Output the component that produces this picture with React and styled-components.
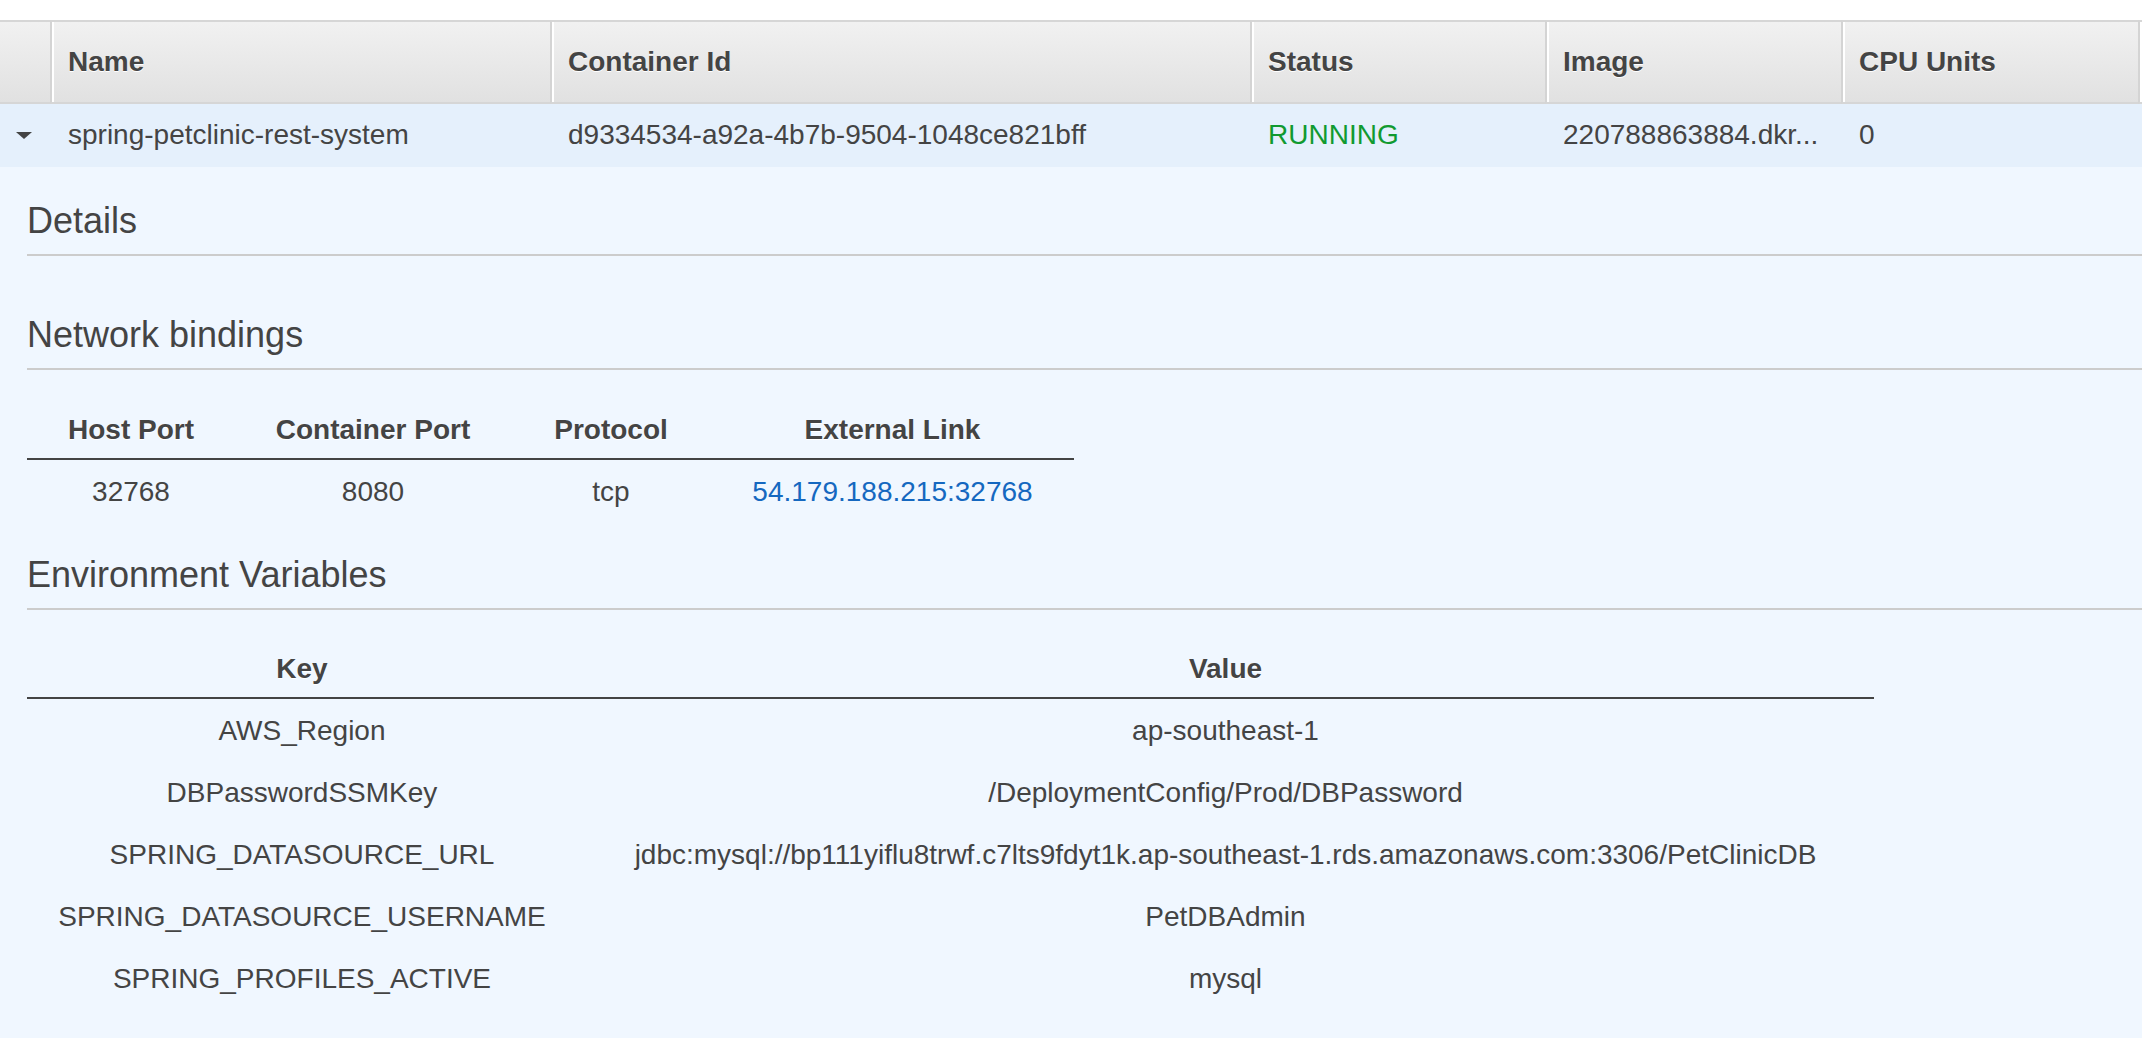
import styled, { createGlobalStyle } from 'styled-components';

const GlobalStyle = createGlobalStyle`
  html, body {
    margin: 0;
    padding: 0;
    background: #fff;
    font-family: "Liberation Sans", Arial, Helvetica, sans-serif;
    color: #444;
    overflow: hidden;
  }
`;

const Page = styled.div`
  width: 2142px;
  height: 1038px;
  padding-top: 20px;
  box-sizing: border-box;
  overflow: hidden;
`;

const Grid = styled.table`
  width: 2438px;
  table-layout: fixed;
  border-collapse: separate;
  border-spacing: 0;
`;

const HeadCell = styled.th`
  width: ${(p) => p.w}px;
  box-sizing: border-box;
  padding: 23px 16px;
  line-height: 34px;
  font-size: 28px;
  font-weight: 700;
  text-align: left;
  color: #444;
  text-shadow: 0 1px 0 #fff;
  white-space: nowrap;
  background: linear-gradient(to bottom, #f1f1f1, #e1e1e1);
  border-top: 2px solid #d6d6d6;
  border-bottom: 2px solid #d6d6d6;
  border-left: ${(p) => (p.first ? 'none' : '2px solid #d4d4d4')};
  box-shadow: ${(p) => (p.first ? 'none' : 'inset 2px 0 0 #fff')};
`;

const Cell = styled.td`
  padding: 14px 14px 15px 18px;
  line-height: 34px;
  font-size: 28px;
  color: ${(p) => p.color || '#444'};
  background: #e5f0fc;
  white-space: nowrap;
  overflow: hidden;
`;

const ExpandCell = styled.td`
  padding: 14px 0 15px;
  line-height: 34px;
  text-align: center;
  background: #e5f0fc;
`;

const Caret = styled.span`
  display: inline-block;
  width: 0;
  height: 0;
  border-left: 8px solid transparent;
  border-right: 8px solid transparent;
  border-top: 7px solid #444;
  vertical-align: middle;
  margin-left: -2px;
`;

const DetailCell = styled.td`
  background: #f0f7ff;
  padding: 32px 0 60px 27px;
  vertical-align: top;
`;

const SectionTitle = styled.h3`
  margin: ${(p) => p.top || 0}px 0 0;
  padding-bottom: 11px;
  font-size: 36px;
  line-height: 44px;
  font-weight: 400;
  color: #444;
  border-bottom: 2px solid #ccc;
`;

const KeyTable = styled.table`
  margin-top: ${(p) => p.top}px;
  table-layout: fixed;
  border-collapse: separate;
  border-spacing: 0;
`;

const KeyHead = styled.th`
  width: ${(p) => p.w}px;
  box-sizing: border-box;
  padding: 5px 10px 11px;
  line-height: 34px;
  font-size: 28px;
  font-weight: 700;
  color: #444;
  text-shadow: 0 1px 0 #fff;
  text-align: center;
  white-space: nowrap;
  border-bottom: 2px solid #444;
`;

const KeyCell = styled.td`
  padding: 15px 10px 13px;
  line-height: 34px;
  font-size: 28px;
  color: #444;
  text-align: center;
  white-space: nowrap;
`;

const Link = styled.a`
  color: #1568c0;
  text-decoration: none;
`;

const columns = [
  { id: 'expand', label: '', w: 50 },
  { id: 'name', label: 'Name', w: 500 },
  { id: 'cid', label: 'Container Id', w: 700 },
  { id: 'status', label: 'Status', w: 295 },
  { id: 'image', label: 'Image', w: 296 },
  { id: 'cpu', label: 'CPU Units', w: 297 },
  { id: 'more', label: '', w: 300 },
];

const envVars = [
  ['AWS_Region', 'ap-southeast-1'],
  ['DBPasswordSSMKey', '/DeploymentConfig/Prod/DBPassword'],
  ['SPRING_DATASOURCE_URL', 'jdbc:mysql://bp111yiflu8trwf.c7lts9fdyt1k.ap-southeast-1.rds.amazonaws.com:3306/PetClinicDB'],
  ['SPRING_DATASOURCE_USERNAME', 'PetDBAdmin'],
  ['SPRING_PROFILES_ACTIVE', 'mysql'],
];

const App = () => {
  return (
    <Page>
      <GlobalStyle />
      <Grid>
        <thead>
          <tr>
            {columns.map((c, i) => (
              <HeadCell key={c.id} w={c.w} first={i === 0}>{c.label}</HeadCell>
            ))}
          </tr>
        </thead>
        <tbody>
          <tr>
            <ExpandCell><Caret /></ExpandCell>
            <Cell>spring-petclinic-rest-system</Cell>
            <Cell>d9334534-a92a-4b7b-9504-1048ce821bff</Cell>
            <Cell color="#119a30">RUNNING</Cell>
            <Cell>220788863884.dkr...</Cell>
            <Cell>0</Cell>
            <Cell />
          </tr>
          <tr>
            <DetailCell colSpan={7}>
              <SectionTitle>Details</SectionTitle>
              <SectionTitle top={57}>Network bindings</SectionTitle>
              <KeyTable top={38}>
                <thead>
                  <tr>
                    <KeyHead w={208}>Host Port</KeyHead>
                    <KeyHead w={276}>Container Port</KeyHead>
                    <KeyHead w={200}>Protocol</KeyHead>
                    <KeyHead w={363}>External Link</KeyHead>
                  </tr>
                </thead>
                <tbody>
                  <tr>
                    <KeyCell>32768</KeyCell>
                    <KeyCell>8080</KeyCell>
                    <KeyCell>tcp</KeyCell>
                    <KeyCell><Link href="#">54.179.188.215:32768</Link></KeyCell>
                  </tr>
                </tbody>
              </KeyTable>
              <SectionTitle top={31}>Environment Variables</SectionTitle>
              <KeyTable top={37}>
                <thead>
                  <tr>
                    <KeyHead w={550}>Key</KeyHead>
                    <KeyHead w={1297}>Value</KeyHead>
                  </tr>
                </thead>
                <tbody>
                  {envVars.map(([k, v]) => (
                    <tr key={k}>
                      <KeyCell>{k}</KeyCell>
                      <KeyCell>{v}</KeyCell>
                    </tr>
                  ))}
                </tbody>
              </KeyTable>
            </DetailCell>
          </tr>
        </tbody>
      </Grid>
    </Page>
  );
};

export default App;
